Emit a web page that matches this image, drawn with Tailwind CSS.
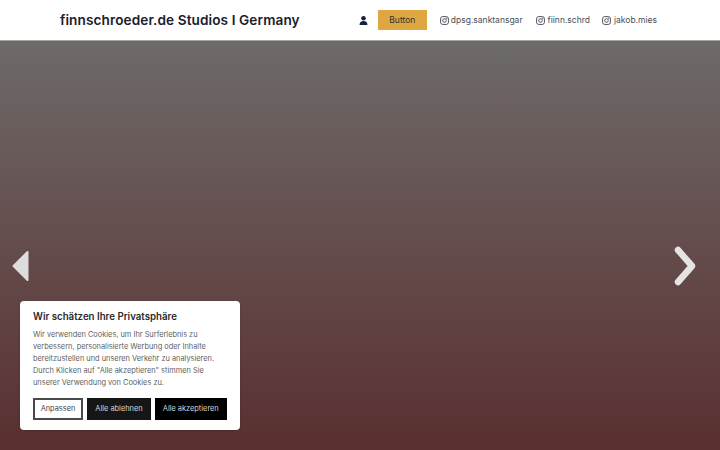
<!DOCTYPE html>
<html lang="de">
  <head>
    <meta charset="UTF-8" />
    <title>finnschroeder.de Studios</title>
    <script src="https://cdn.jsdelivr.net/npm/@tailwindcss/browser@4"></script>
    <meta name="viewport" content="width=device-width, initial-scale=1.0" />
  </head>
  <body class="h-[450px] w-[720px] overflow-hidden bg-white font-['Inter',sans-serif]">
    <!-- Top navigation -->
    <header class="flex h-10 items-center bg-white pl-[60px] pr-[63px]">
      <h1 class="text-[13.6px] font-semibold tracking-[0.1px] text-[#1a202c]">finnschroeder.de Studios I Germany</h1>
      <nav class="ml-auto flex items-center text-[8.5px] text-[#4a4f57]">
        <svg class="h-[9px] w-[9px] text-[#14233c]" viewBox="0 0 16 16" fill="currentColor">
          <circle cx="8" cy="4.2" r="4" />
          <path d="M1 16c0-4.6 2.4-7 7-7s7 2.4 7 7z" />
        </svg>
        <a href="#" class="ml-[10px] flex h-5 w-[49px] items-center justify-center bg-[#dfa741] text-[#33312c]">Button</a>
        <a href="#" class="ml-[13px] flex items-center gap-[2px]">
          <svg class="h-[9px] w-[9px]" viewBox="0 0 16 16" fill="none" stroke="currentColor" stroke-width="1.7">
            <rect x="1" y="1" width="14" height="14" rx="4" />
            <circle cx="8" cy="8" r="3.2" />
            <circle cx="12" cy="4" r="0.5" />
          </svg>
          dpsg.sanktansgar
        </a>
        <a href="#" class="ml-[13px] flex items-center gap-[3px]">
          <svg class="h-[9px] w-[9px]" viewBox="0 0 16 16" fill="none" stroke="currentColor" stroke-width="1.7">
            <rect x="1" y="1" width="14" height="14" rx="4" />
            <circle cx="8" cy="8" r="3.2" />
            <circle cx="12" cy="4" r="0.5" />
          </svg>
          fiinn.schrd
        </a>
        <a href="#" class="ml-[12px] flex items-center gap-[3px]">
          <svg class="h-[9px] w-[9px]" viewBox="0 0 16 16" fill="none" stroke="currentColor" stroke-width="1.7">
            <rect x="1" y="1" width="14" height="14" rx="4" />
            <circle cx="8" cy="8" r="3.2" />
            <circle cx="12" cy="4" r="0.5" />
          </svg>
          jakob.mies
        </a>
      </nav>
    </header>

    <!-- Hero slider -->
    <main class="relative h-[410px] border-t border-[#a8a5a0] bg-gradient-to-b from-[#6d6a6a] to-[#592f30]">
      <button class="absolute left-[12px] top-[209px]" aria-label="Zurück">
        <svg class="block h-[32px] w-[18px]" viewBox="0 0 18 32" fill="#dedcdc" stroke="#dedcdc" stroke-width="2" stroke-linejoin="round">
          <path d="M15.5 2 1.5 16l14 14z" />
        </svg>
      </button>
      <button class="absolute right-[24px] top-[205px]" aria-label="Weiter">
        <svg class="block h-[40px] w-[22px]" viewBox="0 0 22 40" fill="none" stroke="#e6e3e3" stroke-width="6.5" stroke-linecap="round" stroke-linejoin="round">
          <path d="m4 4 14 16L4 36" />
        </svg>
      </button>

      <!-- Cookie consent -->
      <section class="absolute bottom-[20px] left-[20px] w-[220px] rounded-[4px] bg-white px-[13px] pb-[10.5px] pt-[8px] shadow-sm">
        <h2 class="text-[9.7px] font-semibold leading-[16px] text-[#2a2a2a]">Wir schätzen Ihre Privatsphäre</h2>
        <p class="mt-[4px] whitespace-nowrap text-[7.4px] leading-[12px] text-[#5f5f5f]">
          Wir verwenden Cookies, um Ihr Surferlebnis zu<br />
          verbessern, personalisierte Werbung oder Inhalte<br />
          bereitzustellen und unseren Verkehr zu analysieren.<br />
          Durch Klicken auf "Alle akzeptieren" stimmen Sie<br />
          unserer Verwendung von Cookies zu.
        </p>
        <div class="mt-[9px] flex gap-[4px] text-[7.4px]">
          <button class="h-[21.5px] w-[50px] border-2 border-[#4a4a4a] bg-white text-[#444]">Anpassen</button>
          <button class="h-[21.5px] w-[64px] bg-[#161616] text-[#d6d6d6]">Alle ablehnen</button>
          <button class="h-[21.5px] w-[71.5px] bg-black text-[#d6d6d6]">Alle akzeptieren</button>
        </div>
      </section>
    </main>
  </body>
</html>
